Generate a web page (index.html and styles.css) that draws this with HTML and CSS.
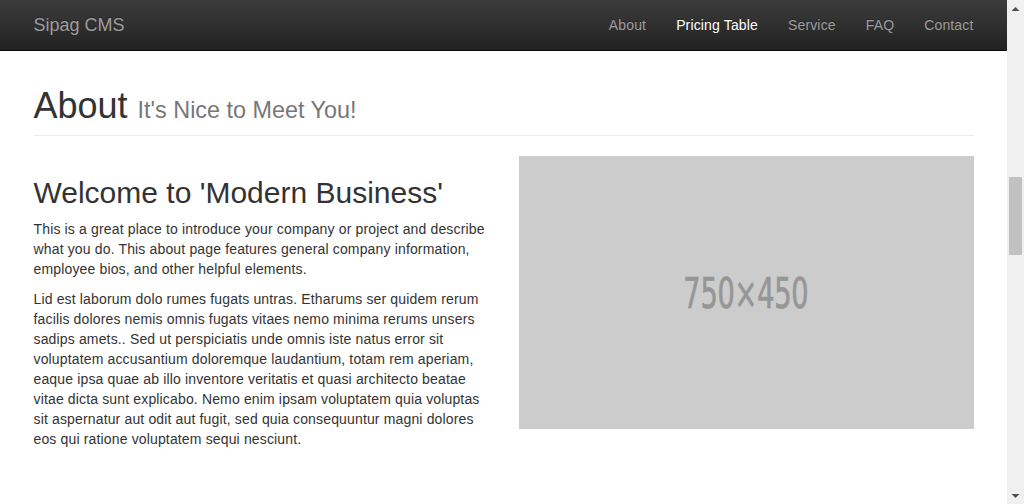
FILE: index.html
```html
<!DOCTYPE html>
<html lang="en">
<head>
<meta charset="utf-8">
<title>About - Sipag CMS</title>
<link rel="stylesheet" href="styles.css">
</head>
<body>
<div class="viewport">
  <nav class="navbar">
    <div class="nav-inner">
      <a class="brand" href="#">Sipag CMS</a>
      <ul class="nav-links">
        <li><a href="#">About</a></li>
        <li><a class="active" href="#">Pricing Table</a></li>
        <li><a href="#">Service</a></li>
        <li><a href="#">FAQ</a></li>
        <li><a href="#">Contact</a></li>
      </ul>
    </div>
  </nav>
  <main class="container">
    <h1 class="page-header">About <small>It's Nice to Meet You!</small></h1>
    <div class="row">
      <div class="col">
        <h2>Welcome to 'Modern Business'</h2>
        <p>This is a great place to introduce your company or project and describe what you do. This about page features general company information, employee bios, and other helpful elements.</p>
        <p>Lid est laborum dolo rumes fugats untras. Etharums ser quidem rerum facilis dolores nemis omnis fugats vitaes nemo minima rerums unsers sadips amets.. Sed ut perspiciatis unde omnis iste natus error sit voluptatem accusantium doloremque laudantium, totam rem aperiam, eaque ipsa quae ab illo inventore veritatis et quasi architecto beatae vitae dicta sunt explicabo. Nemo enim ipsam voluptatem quia voluptas sit aspernatur aut odit aut fugit, sed quia consequuntur magni dolores eos qui ratione voluptatem sequi nesciunt.</p>
      </div>
      <div class="col">
        <div class="placeholder"><span>750×450</span></div>
      </div>
    </div>
  </main>
</div>
<div class="scrollbar">
  <div class="sb-btn"><svg width="17" height="17" viewBox="0 0 17 17"><polygon points="4.5,11 8.5,7 12.5,11" fill="#505050"/></svg></div>
  <div class="sb-track"><div class="sb-thumb"></div></div>
  <div class="sb-btn"><svg width="17" height="17" viewBox="0 0 17 17"><polygon points="4.5,7 8.5,11 12.5,7" fill="#505050"/></svg></div>
</div>
</body>
</html>
```
FILE: styles.css
```css
* { box-sizing: border-box; }
html, body { margin: 0; padding: 0; }
body {
  display: flex;
  height: 504px;
  overflow: hidden;
  background: #fff;
  font-family: "Liberation Sans", Arial, Helvetica, sans-serif;
  font-size: 14px;
  line-height: 20px;
  color: #333;
}
.viewport {
  flex: 1;
  min-width: 0;
  overflow: hidden;
}
.navbar {
  height: 51px;
  background: linear-gradient(to bottom, #3c3c3c 0%, #222 100%);
  border-bottom: 1px solid #080808;
}
.nav-inner {
  width: 970px;
  margin: 0 auto;
  padding: 0 15px;
  display: flex;
  justify-content: space-between;
  align-items: flex-start;
}
.brand {
  display: block;
  margin-left: -15px;
  padding: 15px;
  font-size: 18px;
  line-height: 20px;
  color: #9d9d9d;
  text-decoration: none;
  text-shadow: 0 -1px 0 rgba(0,0,0,.25);
}
.nav-links {
  display: flex;
  list-style: none;
  margin: 0 -15px 0 0;
  padding: 0;
}
.nav-links a {
  display: block;
  padding: 15px;
  line-height: 20px;
  font-size: 14px;
  letter-spacing: 0.15px;
  color: #9d9d9d;
  text-decoration: none;
  text-shadow: 0 -1px 0 rgba(0,0,0,.25);
}
.nav-links a.active { color: #fff; }
.container {
  width: 970px;
  margin: 0 auto;
  padding: 0 15px;
}
.page-header {
  margin: 35px 0 20px;
  padding-bottom: 9px;
  border-bottom: 1px solid #eee;
  font-size: 36px;
  line-height: 1.1;
  font-weight: normal;
  color: #333;
}
.page-header small {
  font-size: 65%;
  color: #777;
  font-weight: normal;
}
.row {
  display: flex;
  gap: 30px;
}
.col {
  flex: 1;
  min-width: 0;
}
h2 {
  margin: 20px 0 10px;
  font-size: 30px;
  line-height: 1.1;
  font-weight: normal;
}
p {
  margin: 0 0 10px;
  letter-spacing: 0.15px;
}
.placeholder {
  height: 273px;
  background: #ccc;
  display: flex;
  align-items: center;
  justify-content: center;
}
.placeholder span {
  font-family: "DejaVu Sans Condensed", "DejaVu Sans", sans-serif;
  font-stretch: condensed;
  font-size: 42px;
  line-height: 1;
  color: #969696;
  display: inline-block;
  transform: translateY(2px) scaleX(0.72);
  letter-spacing: -0.3px;
  -webkit-text-stroke: 0.7px #969696;
}
.scrollbar {
  width: 17px;
  flex: none;
  background: #f0f0f0;
  display: flex;
  flex-direction: column;
}
.sb-btn { height: 17px; flex: none; }
.sb-btn svg { display: block; }
.sb-track { flex: 1; }
.sb-thumb {
  margin: 160px 2px 0;
  height: 78px;
  background: #c1c1c1;
}
```
